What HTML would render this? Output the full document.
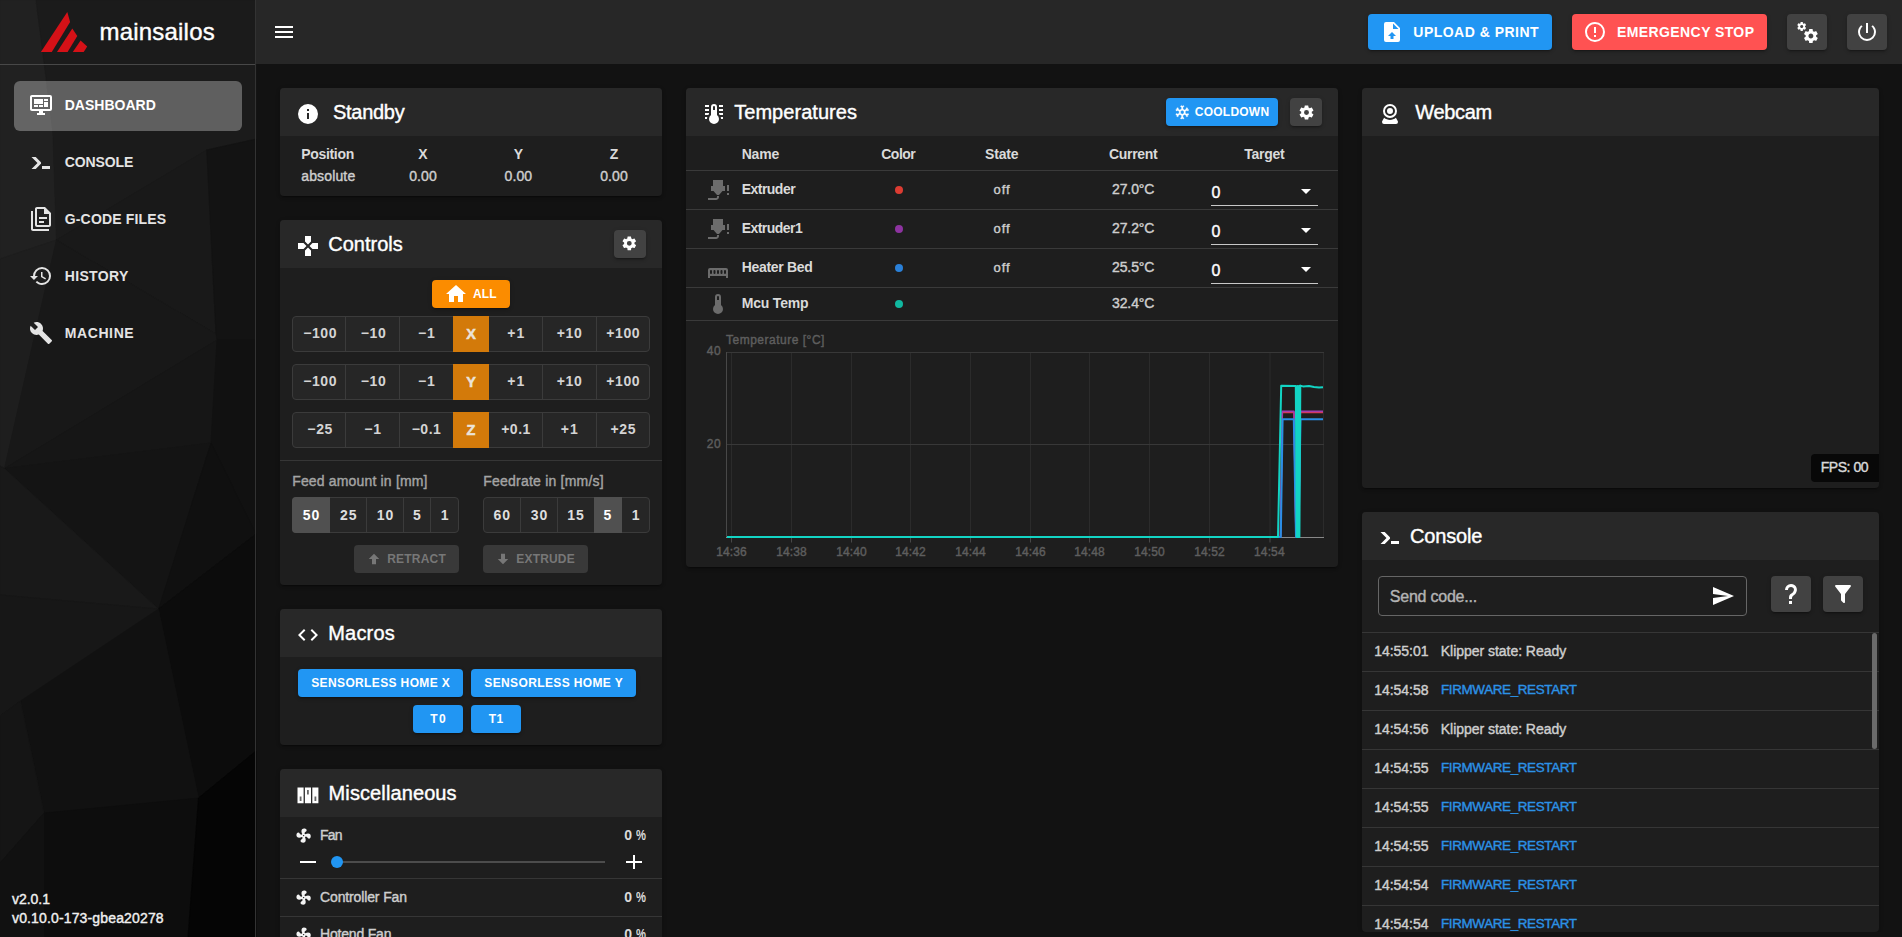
<!DOCTYPE html>
<html lang="en"><head><meta charset="utf-8"><title>Mainsail</title>
<style>
html,body{margin:0;padding:0;}
body{width:1902px;height:937px;overflow:hidden;background:#121212;position:relative;font-family:"Liberation Sans",sans-serif;}
.t{position:absolute;white-space:nowrap;line-height:20px;height:20px;}
.b{position:absolute;box-sizing:border-box;}
.i{position:absolute;display:block;overflow:visible;}
.sh{box-shadow:0 3px 1px -2px rgba(0,0,0,.2),0 2px 2px 0 rgba(0,0,0,.14),0 1px 5px 0 rgba(0,0,0,.12);}
.card{position:absolute;background:#1e1e1e;border-radius:4px;overflow:hidden;box-shadow:0 3px 1px -2px rgba(0,0,0,.2),0 2px 2px 0 rgba(0,0,0,.14),0 1px 5px 0 rgba(0,0,0,.12);}
.hd{position:absolute;left:0;top:0;right:0;height:48px;background:#282828;}
</style></head><body>

<svg class="i" style="left:0;top:0" width="255" height="937" viewBox="0 0 255 937"><rect width="255" height="937" fill="#171717"/><polygon points="0,0 36,0 52.8,130 56.4,240 0,259" fill="#212121" stroke="#212121" stroke-width="0.7"/><polygon points="0,259 56.4,240 33.6,340 4.5,468.5 0,466" fill="#1e1e1e" stroke="#1e1e1e" stroke-width="0.7"/><polygon points="36,0 256,0 256,139 206.7,150 56.4,240 52.8,130" fill="#1b1b1b" stroke="#1b1b1b" stroke-width="0.7"/><polygon points="56.4,240 206.7,150 216,334" fill="#191919" stroke="#191919" stroke-width="0.7"/><polygon points="56.4,240 216,334 217,340 4.5,468.5 33.6,340" fill="#181818" stroke="#181818" stroke-width="0.7"/><polygon points="206.7,150 256,139 256,340 217,340 216,334" fill="#131313" stroke="#131313" stroke-width="0.7"/><polygon points="4.5,468.5 217,340 211,443" fill="#161616" stroke="#161616" stroke-width="0.7"/><polygon points="4.5,468.5 211,443 158.5,609" fill="#141414" stroke="#141414" stroke-width="0.7"/><polygon points="0,466 4.5,468.5 158.5,609 0,595" fill="#191919" stroke="#191919" stroke-width="0.7"/><polygon points="0,595 158.5,609 20.5,701 0,716" fill="#171717" stroke="#171717" stroke-width="0.7"/><polygon points="217,340 256,340 256,534 211,443" fill="#111111" stroke="#111111" stroke-width="0.7"/><polygon points="211,443 256,534 158.5,609" fill="#101010" stroke="#101010" stroke-width="0.7"/><polygon points="158.5,609 256,534 256,751 198.5,798" fill="#0c0c0c" stroke="#0c0c0c" stroke-width="0.7"/><polygon points="20.5,701 158.5,609 198.5,798 44,813" fill="#111111" stroke="#111111" stroke-width="0.7"/><polygon points="0,716 20.5,701 44,813 0,863" fill="#151515" stroke="#151515" stroke-width="0.7"/><polygon points="44,813 198.5,798 188,937 44,937" fill="#0d0d0d" stroke="#0d0d0d" stroke-width="0.7"/><polygon points="198.5,798 256,751 256,937 188,937" fill="#050505" stroke="#050505" stroke-width="0.7"/><polygon points="0,863 44,813 44,937 0,937" fill="#111111" stroke="#111111" stroke-width="0.7"/></svg>
<div class="b" style="left:255px;top:0px;width:1px;height:937px;background:#333333;"></div>
<div class="b" style="left:0px;top:64px;width:255px;height:1px;background:#484848;"></div>
<svg class="i" style="left:0;top:0" width="100" height="64" viewBox="0 0 100 64">
<polygon points="40.9,52 67.3,12 70.1,22.1 51.8,52" fill="#d51117"/>
<polygon points="57,52 72.3,28.5 77.3,36 67.6,52" fill="#d51117"/>
<polygon points="72.8,52 80.6,40.5 87.2,46.5 83.7,52" fill="#d51117"/>
</svg>
<div class="t" style="left:99.50px;top:21.68px;font-size:24px;color:#fff;letter-spacing:0.202px;-webkit-text-stroke:0.4px #fff;">mainsailos</div>
<div class="b" style="left:14px;top:81px;width:228px;height:50px;background:rgba(255,255,255,0.3);border-radius:6px;"></div>
<svg class="i" style="left:29px;top:93px" width="24" height="24" viewBox="0 0 24 24"><path fill="#fff" d="M21,16V4H3V16H21M21,2A2,2 0 0,1 23,4V16A2,2 0 0,1 21,18H14V20H16V22H8V20H10V18H3C1.89,18 1,17.1 1,16V4C1,2.89 1.89,2 3,2H21M5,6H14V11H5V6M15,6H19V8H15V6M19,9V14H15V9H19M5,12H9V14H5V12M10,12H14V14H10V12Z" /></svg>
<div class="t" style="left:64.70px;top:95.15px;font-size:14px;font-weight:700;color:#fff;letter-spacing:0.012px;">DASHBOARD</div>
<svg class="i" style="left:29px;top:150px" width="24" height="24" viewBox="0 0 24 24"><path fill="#e4e4e4" d="M13,19V16H21V19H13M8.5,13L2.47,7H6.71L11.67,11.95C12.25,12.54 12.25,13.5 11.67,14.07L6.74,19H2.5L8.5,13Z" /></svg>
<div class="t" style="left:64.70px;top:152.15px;font-size:14px;font-weight:700;color:#e4e4e4;letter-spacing:-0.105px;">CONSOLE</div>
<svg class="i" style="left:29px;top:207px" width="24" height="24" viewBox="0 0 24 24"><path fill="#e4e4e4" d="M16,0H8C6.9,0 6,0.9 6,2V18C6,19.1 6.9,20 8,20H20C21.1,20 22,19.1 22,18V6L16,0M20,18H8V2H15V7H20V18M4,4V22H20V24H4C2.9,24 2,23.1 2,22V4H4M10,10V12H18V10H10M10,14V16H15V14H10Z" /></svg>
<div class="t" style="left:64.70px;top:209.35px;font-size:14px;font-weight:700;color:#e4e4e4;letter-spacing:0.176px;">G-CODE FILES</div>
<svg class="i" style="left:29px;top:264px" width="24" height="24" viewBox="0 0 24 24"><path fill="#e4e4e4" d="M13.5,8H12V13L16.28,15.54L17,14.33L13.5,12.25V8M13,3A9,9 0 0,0 4,12H1L4.96,16.03L9,12H6A7,7 0 0,1 13,5A7,7 0 0,1 20,12A7,7 0 0,1 13,19C11.07,19 9.32,18.21 8.06,16.94L6.64,18.36C8.27,20 10.5,21 13,21A9,9 0 0,0 22,12A9,9 0 0,0 13,3" /></svg>
<div class="t" style="left:64.70px;top:266.35px;font-size:14px;font-weight:700;color:#e4e4e4;letter-spacing:0.357px;">HISTORY</div>
<svg class="i" style="left:29px;top:321px" width="24" height="24" viewBox="0 0 24 24"><path fill="#e4e4e4" d="M22.7,19L13.6,9.9C14.5,7.6 14,4.9 12.1,3C10.1,1 7.1,0.6 4.7,1.7L9,6L6,9L1.6,4.7C0.4,7.1 0.9,10.1 2.9,12.1C4.8,14 7.5,14.5 9.8,13.6L18.9,22.7C19.3,23.1 19.9,23.1 20.3,22.7L22.6,20.4C23.1,20 23.1,19.3 22.7,19Z" /></svg>
<div class="t" style="left:64.70px;top:323.35px;font-size:14px;font-weight:700;color:#e4e4e4;letter-spacing:0.611px;">MACHINE</div>
<div class="t" style="left:12.00px;top:888.65px;font-size:14px;color:#f0f0f0;letter-spacing:-0.028px;-webkit-text-stroke:0.4px #f0f0f0;">v2.0.1</div>
<div class="t" style="left:12.00px;top:908.15px;font-size:14px;color:#f0f0f0;letter-spacing:0.146px;-webkit-text-stroke:0.4px #f0f0f0;">v0.10.0-173-gbea20278</div>
<div class="b" style="left:256px;top:0px;width:1646px;height:64px;background:#272727;"></div>
<svg class="i" style="left:272px;top:20px" width="24" height="24" viewBox="0 0 24 24"><path fill="#fff" d="M3,6H21V8H3V6M3,11H21V13H3V11M3,16H21V18H3V16Z" /></svg>
<div class="b sh" style="left:1368px;top:14px;width:184px;height:36px;background:#2196f3;border-radius:4px;"></div>
<svg class="i" style="left:1380px;top:20px" width="24" height="24" viewBox="0 0 24 24"><path fill="#fff" d="M14,2H6A2,2 0 0,0 4,4V20A2,2 0 0,0 6,22H18A2,2 0 0,0 20,20V8L14,2M13.5,16V19H10.5V16H8L12,12L16,16H13.5M13,9V3.5L18.5,9H13Z" /></svg>
<div class="t" style="left:1413.30px;top:22.15px;font-size:14px;font-weight:700;color:#fff;letter-spacing:0.484px;">UPLOAD &amp; PRINT</div>
<div class="b sh" style="left:1572px;top:14px;width:195px;height:36px;background:#ff5252;border-radius:4px;"></div>
<svg class="i" style="left:1582.9px;top:20px" width="24" height="24" viewBox="0 0 24 24"><path fill="#fff" d="M11,15H13V17H11V15M11,7H13V13H11V7M12,2C6.47,2 2,6.5 2,12A10,10 0 0,0 12,22A10,10 0 0,0 22,12A10,10 0 0,0 12,2M12,20A8,8 0 0,1 4,12A8,8 0 0,1 12,4A8,8 0 0,1 20,12A8,8 0 0,1 12,20Z" /></svg>
<div class="t" style="left:1617.00px;top:22.15px;font-size:14px;font-weight:700;color:#fff;letter-spacing:0.405px;">EMERGENCY STOP</div>
<div class="b sh" style="left:1787px;top:14px;width:40px;height:36px;background:#424242;border-radius:4px;"></div>
<svg class="i" style="left:1795px;top:20px" width="24" height="24" viewBox="0 0 24 24"><path fill="#fff" d="M15.9,18.45C17.25,18.45 18.35,17.35 18.35,16C18.35,14.65 17.25,13.55 15.9,13.55C14.54,13.55 13.45,14.65 13.45,16C13.45,17.35 14.54,18.45 15.9,18.45M21.1,16.68L22.58,17.84C22.71,17.95 22.75,18.13 22.66,18.29L21.26,20.71C21.17,20.86 21,20.92 20.83,20.86L19.09,20.16C18.73,20.44 18.33,20.67 17.91,20.85L17.64,22.7C17.62,22.87 17.47,23 17.3,23H14.5C14.32,23 14.18,22.87 14.15,22.7L13.89,20.85C13.46,20.67 13.07,20.44 12.71,20.16L10.96,20.86C10.81,20.92 10.62,20.86 10.54,20.71L9.14,18.29C9.05,18.13 9.09,17.95 9.22,17.84L10.7,16.68L10.65,16L10.7,15.31L9.22,14.16C9.09,14.05 9.05,13.86 9.14,13.71L10.54,11.29C10.62,11.13 10.81,11.07 10.96,11.13L12.71,11.84C13.07,11.56 13.46,11.32 13.89,11.15L14.15,9.29C14.18,9.13 14.32,9 14.5,9H17.3C17.47,9 17.62,9.13 17.64,9.29L17.91,11.15C18.33,11.32 18.73,11.56 19.09,11.84L20.83,11.13C21,11.07 21.17,11.13 21.26,11.29L22.66,13.71C22.75,13.86 22.71,14.05 22.58,14.16L21.1,15.31L21.15,16L21.1,16.68M6.69,8.07C7.56,8.07 8.26,7.37 8.26,6.5C8.26,5.63 7.56,4.92 6.69,4.92A1.58,1.58 0 0,0 5.11,6.5C5.11,7.37 5.82,8.07 6.69,8.07M10.03,6.94L11,7.68C11.07,7.75 11.09,7.87 11.03,7.97L10.13,9.53C10.08,9.63 9.96,9.67 9.86,9.63L8.74,9.18L8,9.62L7.81,10.81C7.79,10.92 7.7,11 7.59,11H5.79C5.67,11 5.58,10.92 5.56,10.81L5.4,9.62L4.64,9.18L3.5,9.63C3.41,9.67 3.3,9.63 3.24,9.53L2.34,7.97C2.28,7.87 2.31,7.75 2.39,7.68L3.34,6.94L3.31,6.5L3.34,6.06L2.39,5.32C2.31,5.25 2.28,5.13 2.34,5.03L3.24,3.47C3.3,3.37 3.41,3.33 3.5,3.37L4.63,3.82L5.4,3.38L5.56,2.19C5.58,2.08 5.67,2 5.79,2H7.59C7.7,2 7.79,2.08 7.81,2.19L8,3.38L8.74,3.82L9.86,3.37C9.96,3.33 10.08,3.37 10.13,3.47L11.03,5.03C11.09,5.13 11.07,5.25 11,5.32L10.03,6.06L10.06,6.5L10.03,6.94Z" /></svg>
<div class="b sh" style="left:1847px;top:14px;width:40px;height:36px;background:#424242;border-radius:4px;"></div>
<svg class="i" style="left:1855px;top:20px" width="24" height="24" viewBox="0 0 24 24"><path fill="#fff" d="M13,3H11V13H13V3M17.83,5.17L16.41,6.59C18.05,7.91 19,9.9 19,12A7,7 0 0,1 12,19C8.14,19 5,15.88 5,12C5,9.91 5.95,7.91 7.58,6.58L6.17,5.17C4.23,6.82 3,9.26 3,12A9,9 0 0,0 12,21A9,9 0 0,0 21,12C21,9.27 19.77,6.82 17.83,5.17Z" /></svg>
<div class="b sh" style="left:280px;top:88px;width:382px;height:108px;background:#1e1e1e;border-radius:4px;"></div>
<div class="b" style="left:280px;top:88px;width:382px;height:48px;background:#282828;border-radius:4px 4px 0 0;"></div>
<svg class="i" style="left:296px;top:102px" width="24" height="24" viewBox="0 0 24 24"><path fill="#fff" d="M13,9H11V7H13M13,17H11V11H13M12,2A10,10 0 0,0 2,12A10,10 0 0,0 12,22A10,10 0 0,0 22,12A10,10 0 0,0 12,2Z" /></svg>
<div class="t" style="left:333.00px;top:102.27px;font-size:20px;color:#fff;letter-spacing:-0.282px;-webkit-text-stroke:0.4px #fff;">Standby</div>
<div class="t" style="left:301.30px;top:144.35px;font-size:14px;font-weight:700;color:#dadada;letter-spacing:-0.332px;">Position</div>
<div class="t" style="left:301.20px;top:165.95px;font-size:14px;color:#cecece;letter-spacing:0.153px;-webkit-text-stroke:0.4px #cecece;">absolute</div>
<div class="t" style="left:418.33px;top:144.35px;font-size:14px;font-weight:700;color:#dadada;letter-spacing:0.000px;">X</div>
<div class="t" style="left:409.25px;top:165.95px;font-size:14px;color:#cecece;letter-spacing:0.084px;-webkit-text-stroke:0.4px #cecece;">0.00</div>
<div class="t" style="left:513.63px;top:144.35px;font-size:14px;font-weight:700;color:#dadada;letter-spacing:0.000px;">Y</div>
<div class="t" style="left:504.55px;top:165.95px;font-size:14px;color:#cecece;letter-spacing:0.084px;-webkit-text-stroke:0.4px #cecece;">0.00</div>
<div class="t" style="left:609.72px;top:144.35px;font-size:14px;font-weight:700;color:#dadada;letter-spacing:0.000px;">Z</div>
<div class="t" style="left:600.25px;top:165.95px;font-size:14px;color:#cecece;letter-spacing:0.084px;-webkit-text-stroke:0.4px #cecece;">0.00</div>
<div class="b sh" style="left:280px;top:220px;width:382px;height:365px;background:#1e1e1e;border-radius:4px;"></div>
<div class="b" style="left:280px;top:220px;width:382px;height:48px;background:#282828;border-radius:4px 4px 0 0;"></div>
<svg class="i" style="left:296px;top:234px" width="24" height="24" viewBox="0 0 24 24"><path fill="#fff" d="M16.5,9L13.5,12L16.5,15H22V9M9,16.5V22H15V16.5L12,13.5M7.5,9H2V15H7.5L10.5,12M15,7.5V2H9V7.5L12,10.5L15,7.5Z" /></svg>
<div class="t" style="left:328.30px;top:233.87px;font-size:20px;color:#fff;letter-spacing:0.004px;-webkit-text-stroke:0.4px #fff;">Controls</div>
<div class="b sh" style="left:614px;top:230px;width:32px;height:28px;background:#424242;border-radius:4px;"></div>
<svg class="i" style="left:621.4px;top:235.3px" width="16.6" height="16.6" viewBox="0 0 24 24"><path fill="#fff" d="M12,15.5A3.5,3.5 0 0,1 8.5,12A3.5,3.5 0 0,1 12,8.5A3.5,3.5 0 0,1 15.5,12A3.5,3.5 0 0,1 12,15.5M19.43,12.97C19.47,12.65 19.5,12.33 19.5,12C19.5,11.67 19.47,11.34 19.43,11L21.54,9.37C21.73,9.22 21.78,8.95 21.66,8.73L19.66,5.27C19.54,5.05 19.27,4.96 19.05,5.05L16.56,6.05C16.04,5.66 15.5,5.32 14.87,5.07L14.5,2.42C14.46,2.18 14.25,2 14,2H10C9.75,2 9.54,2.18 9.5,2.42L9.13,5.07C8.5,5.32 7.96,5.66 7.44,6.05L4.95,5.05C4.73,4.96 4.46,5.05 4.34,5.27L2.34,8.73C2.21,8.95 2.27,9.22 2.46,9.37L4.57,11C4.53,11.34 4.5,11.67 4.5,12C4.5,12.33 4.53,12.65 4.57,12.97L2.46,14.63C2.27,14.78 2.21,15.05 2.34,15.27L4.34,18.73C4.46,18.95 4.73,19.03 4.95,18.95L7.44,17.94C7.96,18.34 8.5,18.68 9.13,18.93L9.5,21.58C9.54,21.82 9.75,22 10,22H14C14.25,22 14.46,21.82 14.5,21.58L14.87,18.93C15.5,18.67 16.04,18.34 16.56,17.94L19.05,18.95C19.27,19.03 19.54,18.95 19.66,18.73L21.66,15.27C21.78,15.05 21.73,14.78 21.54,14.63L19.43,12.97Z" /></svg>
<div class="b sh" style="left:432px;top:280px;width:78px;height:28px;background:#fb8c00;border-radius:4px;"></div>
<svg class="i" style="left:444.3px;top:282.2px" width="24" height="24" viewBox="0 0 24 24"><path fill="#fff" d="M10,20V14H14V20H19V12H22L12,3L2,12H5V20H10Z" /></svg>
<div class="t" style="left:473.00px;top:284.04px;font-size:12px;font-weight:700;color:#fff;letter-spacing:0.187px;">ALL</div>
<div class="b" style="left:292px;top:316px;width:358px;height:36px;background:#262626;border-radius:4px;border:1px solid #3b3b3b;"></div>
<div class="b" style="left:453px;top:316px;width:36px;height:36px;background:#d37a0a;"></div>
<div class="b" style="left:345px;top:317px;width:1px;height:34px;background:#3b3b3b;"></div>
<div class="b" style="left:399px;top:317px;width:1px;height:34px;background:#3b3b3b;"></div>
<div class="b" style="left:542px;top:317px;width:1px;height:34px;background:#3b3b3b;"></div>
<div class="b" style="left:595.5px;top:317px;width:1px;height:34px;background:#3b3b3b;"></div>
<div class="t" style="left:303.22px;top:323.45px;font-size:14px;font-weight:700;color:#d4d4d4;letter-spacing:0.578px;">−100</div>
<div class="t" style="left:360.67px;top:323.45px;font-size:14px;font-weight:700;color:#d4d4d4;letter-spacing:0.653px;">−10</div>
<div class="t" style="left:418.03px;top:323.45px;font-size:14px;font-weight:700;color:#d4d4d4;letter-spacing:0.878px;">−1</div>
<div class="t" style="left:466.16px;top:324.38px;font-size:14.5px;font-weight:700;color:#ebe3d8;letter-spacing:0.000px;-webkit-text-stroke:0.5px #ebe3d8;">X</div>
<div class="t" style="left:507.33px;top:323.45px;font-size:14px;font-weight:700;color:#d4d4d4;letter-spacing:0.878px;">+1</div>
<div class="t" style="left:556.72px;top:323.45px;font-size:14px;font-weight:700;color:#d4d4d4;letter-spacing:0.653px;">+10</div>
<div class="t" style="left:606.37px;top:323.45px;font-size:14px;font-weight:700;color:#d4d4d4;letter-spacing:0.578px;">+100</div>
<div class="b" style="left:292px;top:364px;width:358px;height:36px;background:#262626;border-radius:4px;border:1px solid #3b3b3b;"></div>
<div class="b" style="left:453px;top:364px;width:36px;height:36px;background:#d37a0a;"></div>
<div class="b" style="left:345px;top:365px;width:1px;height:34px;background:#3b3b3b;"></div>
<div class="b" style="left:399px;top:365px;width:1px;height:34px;background:#3b3b3b;"></div>
<div class="b" style="left:542px;top:365px;width:1px;height:34px;background:#3b3b3b;"></div>
<div class="b" style="left:595.5px;top:365px;width:1px;height:34px;background:#3b3b3b;"></div>
<div class="t" style="left:303.22px;top:371.45px;font-size:14px;font-weight:700;color:#d4d4d4;letter-spacing:0.578px;">−100</div>
<div class="t" style="left:360.67px;top:371.45px;font-size:14px;font-weight:700;color:#d4d4d4;letter-spacing:0.653px;">−10</div>
<div class="t" style="left:418.03px;top:371.45px;font-size:14px;font-weight:700;color:#d4d4d4;letter-spacing:0.878px;">−1</div>
<div class="t" style="left:466.16px;top:372.38px;font-size:14.5px;font-weight:700;color:#ebe3d8;letter-spacing:0.000px;-webkit-text-stroke:0.5px #ebe3d8;">Y</div>
<div class="t" style="left:507.33px;top:371.45px;font-size:14px;font-weight:700;color:#d4d4d4;letter-spacing:0.878px;">+1</div>
<div class="t" style="left:556.72px;top:371.45px;font-size:14px;font-weight:700;color:#d4d4d4;letter-spacing:0.653px;">+10</div>
<div class="t" style="left:606.37px;top:371.45px;font-size:14px;font-weight:700;color:#d4d4d4;letter-spacing:0.578px;">+100</div>
<div class="b" style="left:292px;top:412px;width:358px;height:36px;background:#262626;border-radius:4px;border:1px solid #3b3b3b;"></div>
<div class="b" style="left:453px;top:412px;width:36px;height:36px;background:#d37a0a;"></div>
<div class="b" style="left:345px;top:413px;width:1px;height:34px;background:#3b3b3b;"></div>
<div class="b" style="left:399px;top:413px;width:1px;height:34px;background:#3b3b3b;"></div>
<div class="b" style="left:542px;top:413px;width:1px;height:34px;background:#3b3b3b;"></div>
<div class="b" style="left:595.5px;top:413px;width:1px;height:34px;background:#3b3b3b;"></div>
<div class="t" style="left:307.32px;top:419.45px;font-size:14px;font-weight:700;color:#d4d4d4;letter-spacing:0.653px;">−25</div>
<div class="t" style="left:364.28px;top:419.45px;font-size:14px;font-weight:700;color:#d4d4d4;letter-spacing:0.878px;">−1</div>
<div class="t" style="left:411.67px;top:419.45px;font-size:14px;font-weight:700;color:#d4d4d4;letter-spacing:0.507px;">−0.1</div>
<div class="t" style="left:466.57px;top:420.38px;font-size:14.5px;font-weight:700;color:#ebe3d8;letter-spacing:0.000px;-webkit-text-stroke:0.5px #ebe3d8;">Z</div>
<div class="t" style="left:501.17px;top:419.45px;font-size:14px;font-weight:700;color:#d4d4d4;letter-spacing:0.507px;">+0.1</div>
<div class="t" style="left:560.83px;top:419.45px;font-size:14px;font-weight:700;color:#d4d4d4;letter-spacing:0.878px;">+1</div>
<div class="t" style="left:610.47px;top:419.45px;font-size:14px;font-weight:700;color:#d4d4d4;letter-spacing:0.653px;">+25</div>
<div class="b" style="left:280px;top:460px;width:382px;height:1px;background:#363636;"></div>
<div class="t" style="left:292.20px;top:471.35px;font-size:14px;color:#a4a4a4;letter-spacing:0.168px;-webkit-text-stroke:0.4px #a4a4a4;">Feed amount in [mm]</div>
<div class="t" style="left:483.30px;top:471.35px;font-size:14px;color:#a4a4a4;letter-spacing:0.217px;-webkit-text-stroke:0.4px #a4a4a4;">Feedrate in [mm/s]</div>
<div class="b" style="left:292px;top:497px;width:167px;height:36px;background:#262626;border-radius:4px;border:1px solid #3b3b3b;"></div>
<div class="b" style="left:292px;top:497px;width:38px;height:36px;background:#505050;border-radius:4px 0 0 4px;"></div>
<div class="b" style="left:366px;top:498px;width:1px;height:34px;background:#3b3b3b;"></div>
<div class="b" style="left:403px;top:498px;width:1px;height:34px;background:#3b3b3b;"></div>
<div class="b" style="left:430px;top:498px;width:1px;height:34px;background:#3b3b3b;"></div>
<div class="t" style="left:302.71px;top:505.15px;font-size:14px;font-weight:700;color:#fff;letter-spacing:1.000px;">50</div>
<div class="t" style="left:339.96px;top:505.15px;font-size:14px;font-weight:700;color:#dedede;letter-spacing:1.000px;">25</div>
<div class="t" style="left:376.71px;top:505.15px;font-size:14px;font-weight:700;color:#dedede;letter-spacing:1.000px;">10</div>
<div class="t" style="left:413.11px;top:505.15px;font-size:14px;font-weight:700;color:#dedede;letter-spacing:0.000px;">5</div>
<div class="t" style="left:440.86px;top:505.15px;font-size:14px;font-weight:700;color:#dedede;letter-spacing:0.000px;">1</div>
<div class="b" style="left:483px;top:497px;width:167px;height:36px;background:#262626;border-radius:4px;border:1px solid #3b3b3b;"></div>
<div class="b" style="left:593.5px;top:497px;width:28px;height:36px;background:#505050;"></div>
<div class="b" style="left:520px;top:498px;width:1px;height:34px;background:#3b3b3b;"></div>
<div class="b" style="left:557px;top:498px;width:1px;height:34px;background:#3b3b3b;"></div>
<div class="t" style="left:493.46px;top:505.15px;font-size:14px;font-weight:700;color:#dedede;letter-spacing:1.000px;">60</div>
<div class="t" style="left:530.71px;top:505.15px;font-size:14px;font-weight:700;color:#dedede;letter-spacing:1.000px;">30</div>
<div class="t" style="left:567.21px;top:505.15px;font-size:14px;font-weight:700;color:#dedede;letter-spacing:1.000px;">15</div>
<div class="t" style="left:603.61px;top:505.15px;font-size:14px;font-weight:700;color:#fff;letter-spacing:0.000px;">5</div>
<div class="t" style="left:631.86px;top:505.15px;font-size:14px;font-weight:700;color:#dedede;letter-spacing:0.000px;">1</div>
<div class="b" style="left:354px;top:545px;width:105px;height:28px;background:#393939;border-radius:4px;"></div>
<svg class="i" style="left:366.2px;top:551.2px" width="16" height="16" viewBox="0 0 24 24"><path fill="#777" d="M15,20H9V12H4.16L12,4.16L19.84,12H15V20Z" /></svg>
<div class="t" style="left:387.20px;top:548.84px;font-size:12px;font-weight:700;color:#777;letter-spacing:0.212px;">RETRACT</div>
<div class="b" style="left:483px;top:545px;width:105px;height:28px;background:#393939;border-radius:4px;"></div>
<svg class="i" style="left:495.2px;top:551.2px" width="16" height="16" viewBox="0 0 24 24"><path fill="#777" d="M9,4H15V12H19.84L12,19.84L4.16,12H9V4Z" /></svg>
<div class="t" style="left:516.30px;top:548.84px;font-size:12px;font-weight:700;color:#777;letter-spacing:0.176px;">EXTRUDE</div>
<div class="b sh" style="left:280px;top:609px;width:382px;height:136px;background:#1e1e1e;border-radius:4px;"></div>
<div class="b" style="left:280px;top:609px;width:382px;height:48px;background:#282828;border-radius:4px 4px 0 0;"></div>
<svg class="i" style="left:296px;top:622.7px" width="24" height="24" viewBox="0 0 24 24"><path fill="#fff" d="M14.6,16.6L19.2,12L14.6,7.4L16,6L22,12L16,18L14.6,16.6M9.4,16.6L4.8,12L9.4,7.4L8,6L2,12L8,18L9.4,16.6Z" /></svg>
<div class="t" style="left:328.30px;top:623.07px;font-size:20px;color:#fff;letter-spacing:0.166px;-webkit-text-stroke:0.4px #fff;">Macros</div>
<div class="b sh" style="left:298px;top:669px;width:165px;height:28px;background:#2196f3;border-radius:4px;"></div>
<div class="t" style="left:311.25px;top:672.84px;font-size:12px;font-weight:700;color:#fff;letter-spacing:0.363px;">SENSORLESS HOME X</div>
<div class="b sh" style="left:471px;top:669px;width:165px;height:28px;background:#2196f3;border-radius:4px;"></div>
<div class="t" style="left:484.25px;top:672.84px;font-size:12px;font-weight:700;color:#fff;letter-spacing:0.376px;">SENSORLESS HOME Y</div>
<div class="b sh" style="left:413px;top:705px;width:50px;height:28px;background:#2196f3;border-radius:4px;"></div>
<div class="t" style="left:430.25px;top:708.84px;font-size:12px;font-weight:700;color:#fff;letter-spacing:1.496px;">T0</div>
<div class="b sh" style="left:471px;top:705px;width:50px;height:28px;background:#2196f3;border-radius:4px;"></div>
<div class="t" style="left:488.75px;top:708.84px;font-size:12px;font-weight:700;color:#fff;letter-spacing:0.496px;">T1</div>
<div class="b sh" style="left:280px;top:769px;width:382px;height:191px;background:#1e1e1e;border-radius:4px;"></div>
<div class="b" style="left:280px;top:769px;width:382px;height:48px;background:#282828;border-radius:4px 4px 0 0;"></div>
<svg class="i" style="left:297px;top:786.6px" width="22" height="17" viewBox="0 0 22 17">
<path fill="#fff" d="M0.5,0.6H6.6V16.3H0.5Z M7.9,0.6H14V16.3H7.9Z M15.3,0.6H21.4V16.3H15.3Z"/>
<path fill="#666" d="M2.7,9.5H4.5V14H2.7Z M10,3H11.8V7.5H10Z M17.5,9.5H19.3V14H17.5Z"/>
</svg>
<div class="t" style="left:328.60px;top:783.07px;font-size:20px;color:#fff;letter-spacing:0.106px;-webkit-text-stroke:0.4px #fff;">Miscellaneous</div>
<svg class="i" style="left:295.4px;top:827.4px" width="17.2" height="17.2" viewBox="0 0 24 24"><path fill="#f4f4f4" d="M12,11A1,1 0 0,0 11,12A1,1 0 0,0 12,13A1,1 0 0,0 13,12A1,1 0 0,0 12,11M12.5,2C17,2 17.11,5.57 14.75,6.75C13.76,7.24 13.32,8.29 13.13,9.22C13.61,9.42 14.03,9.73 14.35,10.13C18.05,8.13 22.03,8.92 22.03,12.5C22.03,17 18.46,17.1 17.28,14.73C16.78,13.74 15.72,13.3 14.79,13.11C14.59,13.59 14.28,14 13.88,14.34C15.87,18.03 15.08,22 11.5,22C7,22 6.91,18.42 9.27,17.24C10.25,16.75 10.69,15.71 10.89,14.79C10.4,14.59 9.97,14.27 9.65,13.87C5.96,15.85 2,15.07 2,11.5C2,7 5.56,6.89 6.74,9.26C7.24,10.25 8.29,10.68 9.22,10.87C9.41,10.39 9.73,9.97 10.14,9.65C8.15,5.96 8.94,2 12.5,2Z" /></svg>
<div class="t" style="left:320.00px;top:825.45px;font-size:14px;color:#cecece;letter-spacing:-0.762px;-webkit-text-stroke:0.4px #cecece;">Fan</div>
<div class="t" style="left:624.30px;top:825.45px;font-size:14px;font-weight:700;color:#dadada;letter-spacing:0.000px;">0</div>
<div class="t" style="left:636.00px;top:825.45px;font-size:14px;font-weight:700;color:#dadada;letter-spacing:0.000px;transform:scaleX(0.8);transform-origin:0 50%;">%</div>
<div class="b" style="left:300.4px;top:860.8px;width:15.3px;height:2.4px;background:#fff;"></div>
<div class="b" style="left:337px;top:861px;width:268px;height:2px;background:#4c4c4c;"></div>
<div class="b" style="left:331px;top:856px;width:12px;height:12px;border-radius:50%;background:#2196f3"></div>
<div class="b" style="left:626.2px;top:860.8px;width:15.4px;height:2.4px;background:#fff;"></div>
<div class="b" style="left:632.7px;top:854.8px;width:2.4px;height:14.6px;background:#fff;"></div>
<div class="b" style="left:280px;top:878px;width:382px;height:1px;background:#363636;"></div>
<svg class="i" style="left:295.4px;top:889px" width="17.2" height="17.2" viewBox="0 0 24 24"><path fill="#f4f4f4" d="M12,11A1,1 0 0,0 11,12A1,1 0 0,0 12,13A1,1 0 0,0 13,12A1,1 0 0,0 12,11M12.5,2C17,2 17.11,5.57 14.75,6.75C13.76,7.24 13.32,8.29 13.13,9.22C13.61,9.42 14.03,9.73 14.35,10.13C18.05,8.13 22.03,8.92 22.03,12.5C22.03,17 18.46,17.1 17.28,14.73C16.78,13.74 15.72,13.3 14.79,13.11C14.59,13.59 14.28,14 13.88,14.34C15.87,18.03 15.08,22 11.5,22C7,22 6.91,18.42 9.27,17.24C10.25,16.75 10.69,15.71 10.89,14.79C10.4,14.59 9.97,14.27 9.65,13.87C5.96,15.85 2,15.07 2,11.5C2,7 5.56,6.89 6.74,9.26C7.24,10.25 8.29,10.68 9.22,10.87C9.41,10.39 9.73,9.97 10.14,9.65C8.15,5.96 8.94,2 12.5,2Z" /></svg>
<div class="t" style="left:320.00px;top:887.05px;font-size:14px;color:#cecece;letter-spacing:-0.131px;-webkit-text-stroke:0.4px #cecece;">Controller Fan</div>
<div class="t" style="left:624.30px;top:887.05px;font-size:14px;font-weight:700;color:#dadada;letter-spacing:0.000px;">0</div>
<div class="t" style="left:636.00px;top:887.05px;font-size:14px;font-weight:700;color:#dadada;letter-spacing:0.000px;transform:scaleX(0.8);transform-origin:0 50%;">%</div>
<div class="b" style="left:280px;top:916px;width:382px;height:1px;background:#363636;"></div>
<svg class="i" style="left:295.4px;top:926px" width="17.2" height="17.2" viewBox="0 0 24 24"><path fill="#f4f4f4" d="M12,11A1,1 0 0,0 11,12A1,1 0 0,0 12,13A1,1 0 0,0 13,12A1,1 0 0,0 12,11M12.5,2C17,2 17.11,5.57 14.75,6.75C13.76,7.24 13.32,8.29 13.13,9.22C13.61,9.42 14.03,9.73 14.35,10.13C18.05,8.13 22.03,8.92 22.03,12.5C22.03,17 18.46,17.1 17.28,14.73C16.78,13.74 15.72,13.3 14.79,13.11C14.59,13.59 14.28,14 13.88,14.34C15.87,18.03 15.08,22 11.5,22C7,22 6.91,18.42 9.27,17.24C10.25,16.75 10.69,15.71 10.89,14.79C10.4,14.59 9.97,14.27 9.65,13.87C5.96,15.85 2,15.07 2,11.5C2,7 5.56,6.89 6.74,9.26C7.24,10.25 8.29,10.68 9.22,10.87C9.41,10.39 9.73,9.97 10.14,9.65C8.15,5.96 8.94,2 12.5,2Z" /></svg>
<div class="t" style="left:320.00px;top:924.15px;font-size:14px;color:#cecece;letter-spacing:-0.184px;-webkit-text-stroke:0.4px #cecece;">Hotend Fan</div>
<div class="t" style="left:624.30px;top:924.15px;font-size:14px;font-weight:700;color:#dadada;letter-spacing:0.000px;">0</div>
<div class="t" style="left:636.00px;top:924.15px;font-size:14px;font-weight:700;color:#dadada;letter-spacing:0.000px;transform:scaleX(0.8);transform-origin:0 50%;">%</div>
<div class="b sh" style="left:686px;top:88px;width:652px;height:479px;background:#1e1e1e;border-radius:4px;"></div>
<div class="b" style="left:686px;top:88px;width:652px;height:48px;background:#282828;border-radius:4px 4px 0 0;"></div>
<svg class="i" style="left:701.8px;top:102px" width="24" height="24" viewBox="0 0 24 24"><path fill="#fff" d="M17,3H21V5H17V3M17,7H21V9H17V7M17,11H21V13H17.75L17,12.1V11M21,15V17H19C19,16.31 18.9,15.63 18.71,15H21M7,3V5H3V3H7M7,7V9H3V7H7M7,11V12.1L6.25,13H3V11H7M3,15H5.29C5.1,15.63 5,16.31 5,17H3V15M15,13V5A3,3 0 0,0 12,2A3,3 0 0,0 9,5V13A5,5 0 0,0 7,17A5,5 0 0,0 12,22A5,5 0 0,0 17,17A5,5 0 0,0 15,13M11,5A1,1 0 0,1 12,4A1,1 0 0,1 13,5V8H11V5Z" /></svg>
<div class="t" style="left:734.20px;top:102.27px;font-size:20px;color:#fff;letter-spacing:0.047px;-webkit-text-stroke:0.4px #fff;">Temperatures</div>
<div class="b sh" style="left:1166px;top:98px;width:112px;height:28px;background:#2196f3;border-radius:4px;"></div>
<svg class="i" style="left:1173.8px;top:103.8px" width="16.5" height="16.5" viewBox="0 0 24 24"><path fill="#fff" d="M20.79,13.95L18.46,14.57L16.46,13.44V10.56L18.46,9.43L20.79,10.05L21.31,8.12L19.54,7.65L20,5.88L18.07,5.36L17.45,7.69L15.45,8.82L13,7.38V5.12L14.71,3.41L13.29,2L12,3.29L10.71,2L9.29,3.41L11,5.12V7.38L8.5,8.82L6.5,7.69L5.92,5.36L4,5.88L4.47,7.65L2.7,8.12L3.22,10.05L5.55,9.43L7.55,10.56V13.45L5.55,14.58L3.22,13.96L2.7,15.89L4.47,16.36L4,18.12L5.93,18.64L6.55,16.31L8.55,15.18L11,16.62V18.88L9.29,20.59L10.71,22L12,20.71L13.29,22L14.7,20.59L13,18.88V16.62L15.5,15.17L17.5,16.3L18.12,18.63L20,18.12L19.53,16.35L21.3,15.88L20.79,13.95M9.5,10.56L12,9.11L14.5,10.56V13.44L12,14.89L9.5,13.44V10.56Z" stroke="#fff" stroke-width="0.5"/></svg>
<div class="t" style="left:1194.80px;top:102.04px;font-size:12px;font-weight:700;color:#fff;letter-spacing:0.235px;">COOLDOWN</div>
<div class="b sh" style="left:1290px;top:98px;width:32px;height:28px;background:#424242;border-radius:4px;"></div>
<svg class="i" style="left:1297.5px;top:103.5px" width="17" height="17" viewBox="0 0 24 24"><path fill="#fff" d="M12,15.5A3.5,3.5 0 0,1 8.5,12A3.5,3.5 0 0,1 12,8.5A3.5,3.5 0 0,1 15.5,12A3.5,3.5 0 0,1 12,15.5M19.43,12.97C19.47,12.65 19.5,12.33 19.5,12C19.5,11.67 19.47,11.34 19.43,11L21.54,9.37C21.73,9.22 21.78,8.95 21.66,8.73L19.66,5.27C19.54,5.05 19.27,4.96 19.05,5.05L16.56,6.05C16.04,5.66 15.5,5.32 14.87,5.07L14.5,2.42C14.46,2.18 14.25,2 14,2H10C9.75,2 9.54,2.18 9.5,2.42L9.13,5.07C8.5,5.32 7.96,5.66 7.44,6.05L4.95,5.05C4.73,4.96 4.46,5.05 4.34,5.27L2.34,8.73C2.21,8.95 2.27,9.22 2.46,9.37L4.57,11C4.53,11.34 4.5,11.67 4.5,12C4.5,12.33 4.53,12.65 4.57,12.97L2.46,14.63C2.27,14.78 2.21,15.05 2.34,15.27L4.34,18.73C4.46,18.95 4.73,19.03 4.95,18.95L7.44,17.94C7.96,18.34 8.5,18.68 9.13,18.93L9.5,21.58C9.54,21.82 9.75,22 10,22H14C14.25,22 14.46,21.82 14.5,21.58L14.87,18.93C15.5,18.67 16.04,18.34 16.56,17.94L19.05,18.95C19.27,19.03 19.54,18.95 19.66,18.73L21.66,15.27C21.78,15.05 21.73,14.78 21.54,14.63L19.43,12.97Z" /></svg>
<div class="t" style="left:741.70px;top:144.45px;font-size:14px;font-weight:700;color:#dadada;letter-spacing:-0.210px;">Name</div>
<div class="t" style="left:881.25px;top:144.45px;font-size:14px;font-weight:700;color:#dadada;letter-spacing:-0.513px;">Color</div>
<div class="t" style="left:985.00px;top:144.45px;font-size:14px;font-weight:700;color:#dadada;letter-spacing:-0.159px;">State</div>
<div class="t" style="left:1109.00px;top:144.45px;font-size:14px;font-weight:700;color:#dadada;letter-spacing:-0.327px;">Current</div>
<div class="t" style="left:1244.30px;top:144.45px;font-size:14px;font-weight:700;color:#dadada;letter-spacing:-0.270px;">Target</div>
<div class="b" style="left:686px;top:170px;width:652px;height:1px;background:#3a3a3a;"></div>
<div class="b" style="left:686px;top:209px;width:652px;height:1px;background:#3a3a3a;"></div>
<div class="b" style="left:686px;top:248px;width:652px;height:1px;background:#3a3a3a;"></div>
<div class="b" style="left:686px;top:287px;width:652px;height:1px;background:#3a3a3a;"></div>
<div class="b" style="left:686px;top:320px;width:652px;height:1px;background:#3a3a3a;"></div>
<div class="t" style="left:741.70px;top:179.45px;font-size:14px;font-weight:700;color:#dadada;letter-spacing:-0.525px;">Extruder</div>
<div class="b" style="left:894.7px;top:186.2px;width:8px;height:8px;border-radius:50%;background:#dc3c32"></div>
<div class="t" style="left:1112.00px;top:179.45px;font-size:14px;color:#cecece;letter-spacing:-0.112px;-webkit-text-stroke:0.4px #cecece;">27.0°C</div>
<div class="t" style="left:993.60px;top:179.60px;font-size:13px;color:#cecece;letter-spacing:0.891px;-webkit-text-stroke:0.4px #cecece;">off</div>
<div class="t" style="left:1211.40px;top:182.96px;font-size:16px;color:#fff;letter-spacing:0.000px;-webkit-text-stroke:0.4px #fff;">0</div>
<div class="b" style="left:1211px;top:205px;width:107px;height:1px;background:#c8c8c8;"></div>
<svg class="i" style="left:1293.6px;top:179px" width="24" height="24" viewBox="0 0 24 24"><path fill="#fff" d="M7,10L12,15L17,10H7Z" /></svg>
<svg class="i" style="left:706px;top:178.1px" width="24" height="24" viewBox="0 0 24 24"><path fill="#6c6c6c" d="M7 2H17V8H19V13H16.5L13 17H11L7.5 13H5V8H7V2M10 22H2V20H10C10.55 20 11 19.55 11 19V18H13V19C13 20.66 11.66 22 10 22M21 13V7H23V13H21M21 17V15H23V17H21Z" /></svg>
<div class="t" style="left:741.70px;top:218.45px;font-size:14px;font-weight:700;color:#dadada;letter-spacing:-0.545px;">Extruder1</div>
<div class="b" style="left:894.7px;top:225.2px;width:8px;height:8px;border-radius:50%;background:#8d33a0"></div>
<div class="t" style="left:1112.00px;top:218.45px;font-size:14px;color:#cecece;letter-spacing:-0.112px;-webkit-text-stroke:0.4px #cecece;">27.2°C</div>
<div class="t" style="left:993.60px;top:218.60px;font-size:13px;color:#cecece;letter-spacing:0.891px;-webkit-text-stroke:0.4px #cecece;">off</div>
<div class="t" style="left:1211.40px;top:221.96px;font-size:16px;color:#fff;letter-spacing:0.000px;-webkit-text-stroke:0.4px #fff;">0</div>
<div class="b" style="left:1211px;top:244px;width:107px;height:1px;background:#c8c8c8;"></div>
<svg class="i" style="left:1293.6px;top:218px" width="24" height="24" viewBox="0 0 24 24"><path fill="#fff" d="M7,10L12,15L17,10H7Z" /></svg>
<svg class="i" style="left:706px;top:217.1px" width="24" height="24" viewBox="0 0 24 24"><path fill="#6c6c6c" d="M7 2H17V8H19V13H16.5L13 17H11L7.5 13H5V8H7V2M10 22H2V20H10C10.55 20 11 19.55 11 19V18H13V19C13 20.66 11.66 22 10 22M21 13V7H23V13H21M21 17V15H23V17H21Z" /></svg>
<div class="t" style="left:741.70px;top:257.45px;font-size:14px;font-weight:700;color:#dadada;letter-spacing:-0.313px;">Heater Bed</div>
<div class="b" style="left:894.7px;top:264.2px;width:8px;height:8px;border-radius:50%;background:#2a80d8"></div>
<div class="t" style="left:1112.00px;top:257.45px;font-size:14px;color:#cecece;letter-spacing:-0.112px;-webkit-text-stroke:0.4px #cecece;">25.5°C</div>
<div class="t" style="left:993.60px;top:257.60px;font-size:13px;color:#cecece;letter-spacing:0.891px;-webkit-text-stroke:0.4px #cecece;">off</div>
<div class="t" style="left:1211.40px;top:260.96px;font-size:16px;color:#fff;letter-spacing:0.000px;-webkit-text-stroke:0.4px #fff;">0</div>
<div class="b" style="left:1211px;top:283px;width:107px;height:1px;background:#c8c8c8;"></div>
<svg class="i" style="left:1293.6px;top:257px" width="24" height="24" viewBox="0 0 24 24"><path fill="#fff" d="M7,10L12,15L17,10H7Z" /></svg>
<svg class="i" style="left:706px;top:255.5px" width="24" height="24" viewBox="0 0 24 24"><path fill="#6c6c6c" d="M2,22V14A2,2 0 0,1 4,12H20A2,2 0 0,1 22,14V22H20V20H4V22H2M5,14A1,1 0 0,0 4,15V17A1,1 0 0,0 5,18A1,1 0 0,0 6,17V15A1,1 0 0,0 5,14M8.5,14A1,1 0 0,0 7.5,15V17A1,1 0 0,0 8.5,18A1,1 0 0,0 9.5,17V15A1,1 0 0,0 8.5,14M12,14A1,1 0 0,0 11,15V17A1,1 0 0,0 12,18A1,1 0 0,0 13,17V15A1,1 0 0,0 12,14M15.5,14A1,1 0 0,0 14.5,15V17A1,1 0 0,0 15.5,18A1,1 0 0,0 16.5,17V15A1,1 0 0,0 15.5,14M19,14A1,1 0 0,0 18,15V17A1,1 0 0,0 19,18A1,1 0 0,0 20,17V15A1,1 0 0,0 19,14Z" /></svg>
<div class="t" style="left:741.70px;top:293.45px;font-size:14px;font-weight:700;color:#dadada;letter-spacing:-0.184px;">Mcu Temp</div>
<div class="b" style="left:894.7px;top:300.2px;width:8px;height:8px;border-radius:50%;background:#10b8a0"></div>
<div class="t" style="left:1112.00px;top:293.45px;font-size:14px;color:#cecece;letter-spacing:-0.112px;-webkit-text-stroke:0.4px #cecece;">32.4°C</div>
<svg class="i" style="left:705.8px;top:292.3px" width="24" height="24" viewBox="0 0 24 24"><path fill="#6c6c6c" d="M15,13V5A3,3 0 0,0 12,2A3,3 0 0,0 9,5V13A5,5 0 0,0 7,17A5,5 0 0,0 12,22A5,5 0 0,0 17,17A5,5 0 0,0 15,13M12,4A1,1 0 0,1 13,5V8H11V5A1,1 0 0,1 12,4Z" /></svg>
<div class="t" style="left:726.00px;top:330.24px;font-size:12px;color:#5e5e5e;letter-spacing:0.504px;-webkit-text-stroke:0.4px #5e5e5e;">Temperature [°C]</div>
<div class="t" style="left:706.80px;top:340.64px;font-size:12px;color:#5e5e5e;letter-spacing:0.652px;-webkit-text-stroke:0.4px #5e5e5e;">40</div>
<div class="t" style="left:706.80px;top:433.74px;font-size:12px;color:#5e5e5e;letter-spacing:0.652px;-webkit-text-stroke:0.4px #5e5e5e;">20</div>
<svg class="i" style="left:700px;top:345px" width="640" height="205" viewBox="700 345 640 205" shape-rendering="auto"><rect x="731.0" y="352" width="1" height="185" fill="#2b2b2b"/><rect x="731.0" y="537" width="1" height="5.5" fill="#484848"/><rect x="791.0" y="352" width="1" height="185" fill="#2b2b2b"/><rect x="791.0" y="537" width="1" height="5.5" fill="#484848"/><rect x="851.0" y="352" width="1" height="185" fill="#2b2b2b"/><rect x="851.0" y="537" width="1" height="5.5" fill="#484848"/><rect x="910.0" y="352" width="1" height="185" fill="#2b2b2b"/><rect x="910.0" y="537" width="1" height="5.5" fill="#484848"/><rect x="970.0" y="352" width="1" height="185" fill="#2b2b2b"/><rect x="970.0" y="537" width="1" height="5.5" fill="#484848"/><rect x="1030.0" y="352" width="1" height="185" fill="#2b2b2b"/><rect x="1030.0" y="537" width="1" height="5.5" fill="#484848"/><rect x="1089.0" y="352" width="1" height="185" fill="#2b2b2b"/><rect x="1089.0" y="537" width="1" height="5.5" fill="#484848"/><rect x="1149.0" y="352" width="1" height="185" fill="#2b2b2b"/><rect x="1149.0" y="537" width="1" height="5.5" fill="#484848"/><rect x="1209.0" y="352" width="1" height="185" fill="#2b2b2b"/><rect x="1209.0" y="537" width="1" height="5.5" fill="#484848"/><rect x="1269.5" y="352" width="1" height="185" fill="#2b2b2b"/><rect x="1269.5" y="537" width="1" height="5.5" fill="#484848"/><rect x="1323" y="352" width="1" height="185" fill="#2b2b2b"/><rect x="727" y="352" width="597" height="1" fill="#383838"/><rect x="727" y="444" width="597" height="1" fill="#383838"/><rect x="726" y="352" width="1" height="186" fill="#484848"/><rect x="726" y="537" width="598" height="1" fill="#888"/><polyline fill="none" stroke="#e0384a" stroke-width="1.6" stroke-linejoin="round" points="727.0,537.0 1280.5,537.0 1282.3,412.5 1294.0,412.5 1296.0,537.0 1298.5,537.0 1300.3,412.5 1323.0,412.5"/><polyline fill="none" stroke="#a03cb0" stroke-width="1.6" stroke-linejoin="round" points="727.0,537.0 1280.5,537.0 1282.3,411.4 1294.0,411.4 1296.0,537.0 1298.5,537.0 1300.3,411.4 1323.0,411.4"/><polyline fill="none" stroke="#2a8ee6" stroke-width="2" stroke-linejoin="round" points="727.0,537.0 1280.8,537.0 1282.6,419.3 1293.8,419.3 1296.0,537.0 1298.5,537.0 1300.5,419.3 1323.0,419.3"/><polyline fill="none" stroke="#12d4c4" stroke-width="2" stroke-linejoin="round" points="727.0,537.0 1278.0,537.0 1281.2,385.8 1295.8,386.0 1296.8,537.0 1297.5,386.0 1298.2,537.0 1299.0,386.0 1299.4,537.0 1300.3,385.6 1303.0,386.4 1309.0,386.0 1314.0,387.0 1319.0,387.6 1323.0,387.2"/></svg>
<div class="t" style="left:716.20px;top:542.04px;font-size:12px;color:#5e5e5e;letter-spacing:0.143px;-webkit-text-stroke:0.4px #5e5e5e;">14:36</div>
<div class="t" style="left:776.20px;top:542.04px;font-size:12px;color:#5e5e5e;letter-spacing:0.143px;-webkit-text-stroke:0.4px #5e5e5e;">14:38</div>
<div class="t" style="left:836.20px;top:542.04px;font-size:12px;color:#5e5e5e;letter-spacing:0.143px;-webkit-text-stroke:0.4px #5e5e5e;">14:40</div>
<div class="t" style="left:895.20px;top:542.04px;font-size:12px;color:#5e5e5e;letter-spacing:0.143px;-webkit-text-stroke:0.4px #5e5e5e;">14:42</div>
<div class="t" style="left:955.20px;top:542.04px;font-size:12px;color:#5e5e5e;letter-spacing:0.143px;-webkit-text-stroke:0.4px #5e5e5e;">14:44</div>
<div class="t" style="left:1015.20px;top:542.04px;font-size:12px;color:#5e5e5e;letter-spacing:0.143px;-webkit-text-stroke:0.4px #5e5e5e;">14:46</div>
<div class="t" style="left:1074.20px;top:542.04px;font-size:12px;color:#5e5e5e;letter-spacing:0.143px;-webkit-text-stroke:0.4px #5e5e5e;">14:48</div>
<div class="t" style="left:1134.20px;top:542.04px;font-size:12px;color:#5e5e5e;letter-spacing:0.143px;-webkit-text-stroke:0.4px #5e5e5e;">14:50</div>
<div class="t" style="left:1194.20px;top:542.04px;font-size:12px;color:#5e5e5e;letter-spacing:0.143px;-webkit-text-stroke:0.4px #5e5e5e;">14:52</div>
<div class="t" style="left:1254.00px;top:542.04px;font-size:12px;color:#5e5e5e;letter-spacing:0.143px;-webkit-text-stroke:0.4px #5e5e5e;">14:54</div>
<div class="b sh" style="left:1362px;top:88px;width:517px;height:400px;background:#1e1e1e;border-radius:4px;"></div>
<div class="b" style="left:1362px;top:88px;width:517px;height:48px;background:#282828;border-radius:4px 4px 0 0;"></div>
<svg class="i" style="left:1378px;top:102px" width="24" height="24" viewBox="0 0 24 24"><path fill="#fff" d="M12,2A7,7 0 0,1 19,9A7,7 0 0,1 12,16A7,7 0 0,1 5,9A7,7 0 0,1 12,2M12,4A5,5 0 0,0 7,9A5,5 0 0,0 12,14A5,5 0 0,0 17,9A5,5 0 0,0 12,4M12,6A3,3 0 0,1 15,9A3,3 0 0,1 12,12A3,3 0 0,1 9,9A3,3 0 0,1 12,6M6,22A2,2 0 0,1 4,20C4,19.62 4.1,19.27 4.29,18.97L6.11,15.81C7.69,17.17 9.75,18 12,18C14.25,18 16.31,17.17 17.89,15.81L19.71,18.97C19.9,19.27 20,19.62 20,20A2,2 0 0,1 18,22H6Z" /></svg>
<div class="t" style="left:1415.30px;top:102.27px;font-size:20px;color:#fff;letter-spacing:-0.329px;-webkit-text-stroke:0.4px #fff;">Webcam</div>
<div class="b" style="left:1811px;top:454px;width:68px;height:28px;background:#080808;border-radius:4px 0 0 4px;"></div>
<div class="t" style="left:1820.70px;top:457.35px;font-size:14px;color:#d8d8d8;letter-spacing:-0.447px;-webkit-text-stroke:0.4px #d8d8d8;">FPS: 00</div>
<div class="b sh" style="left:1362px;top:512px;width:517px;height:420px;background:#1e1e1e;border-radius:4px;"></div>
<div class="b" style="left:1362px;top:512px;width:517px;height:48px;background:#282828;border-radius:4px 4px 0 0;"></div>
<svg class="i" style="left:1378px;top:524.5px" width="24" height="24" viewBox="0 0 24 24"><path fill="#fff" d="M13,19V16H21V19H13M8.5,13L2.47,7H6.71L11.67,11.95C12.25,12.54 12.25,13.5 11.67,14.07L6.74,19H2.5L8.5,13Z" /></svg>
<div class="t" style="left:1410.00px;top:526.27px;font-size:20px;color:#fff;letter-spacing:-0.147px;-webkit-text-stroke:0.4px #fff;">Console</div>
<div class="b" style="left:1378px;top:576px;width:369px;height:40px;background:transparent;border-radius:4px;border:1px solid #666666;"></div>
<div class="t" style="left:1389.80px;top:587.46px;font-size:16px;color:#b4b4b4;letter-spacing:-0.231px;-webkit-text-stroke:0.4px #b4b4b4;">Send code...</div>
<svg class="i" style="left:1711px;top:584.3px" width="24" height="24" viewBox="0 0 24 24"><path fill="#fff" d="M2,21L23,12L2,3V10L17,12L2,14V21Z" /></svg>
<div class="b sh" style="left:1771px;top:576px;width:40px;height:36px;background:#424242;border-radius:4px;"></div>
<svg class="i" style="left:1779px;top:582px" width="24" height="24" viewBox="0 0 24 24"><path fill="#fff" d="M10,19H13V22H10V19M12,2C17.35,2.22 19.68,7.62 16.5,11.67C15.67,12.67 14.33,13.33 13.67,14.17C13,15 13,16 13,17H10C10,15.33 10,13.92 10.67,12.92C11.33,11.92 12.67,11.33 13.5,10.67C15.92,8.43 15.32,5.26 12,5A3,3 0 0,0 9,8H6A6,6 0 0,1 12,2Z" /></svg>
<div class="b sh" style="left:1823px;top:576px;width:40px;height:36px;background:#424242;border-radius:4px;"></div>
<svg class="i" style="left:1831px;top:582px" width="24" height="24" viewBox="0 0 24 24"><path fill="#fff" d="M14,12V19.88C14.04,20.18 13.94,20.5 13.71,20.71C13.32,21.1 12.69,21.1 12.3,20.71L10.29,18.7C10.06,18.47 9.96,18.16 10,17.87V12H9.97L4.21,4.62C3.87,4.19 3.95,3.56 4.38,3.22C4.57,3.08 4.78,3 5,3V3H19V3C19.22,3 19.43,3.08 19.62,3.22C20.05,3.56 20.13,4.19 19.79,4.62L14.03,12H14Z" /></svg>
<div class="b" style="left:1362px;top:632px;width:517px;height:1px;background:#363636;"></div>
<div class="t" style="left:1374.20px;top:641.15px;font-size:14px;color:#cecece;letter-spacing:-0.028px;-webkit-text-stroke:0.4px #cecece;">14:55:01</div>
<div class="t" style="left:1440.80px;top:641.15px;font-size:14px;color:#cecece;letter-spacing:-0.035px;-webkit-text-stroke:0.4px #cecece;">Klipper state: Ready</div>
<div class="b" style="left:1362px;top:671px;width:517px;height:1px;background:#363636;"></div>
<div class="t" style="left:1374.20px;top:680.15px;font-size:14px;color:#cecece;letter-spacing:-0.028px;-webkit-text-stroke:0.4px #cecece;">14:54:58</div>
<div class="t" style="left:1441.00px;top:680.36px;font-size:13.4px;color:#2c92e6;letter-spacing:-0.341px;-webkit-text-stroke:0.4px #2c92e6;">FIRMWARE_RESTART</div>
<div class="b" style="left:1362px;top:710px;width:517px;height:1px;background:#363636;"></div>
<div class="t" style="left:1374.20px;top:719.15px;font-size:14px;color:#cecece;letter-spacing:-0.028px;-webkit-text-stroke:0.4px #cecece;">14:54:56</div>
<div class="t" style="left:1440.80px;top:719.15px;font-size:14px;color:#cecece;letter-spacing:-0.035px;-webkit-text-stroke:0.4px #cecece;">Klipper state: Ready</div>
<div class="b" style="left:1362px;top:749px;width:517px;height:1px;background:#363636;"></div>
<div class="t" style="left:1374.20px;top:758.15px;font-size:14px;color:#cecece;letter-spacing:-0.028px;-webkit-text-stroke:0.4px #cecece;">14:54:55</div>
<div class="t" style="left:1441.00px;top:758.36px;font-size:13.4px;color:#2c92e6;letter-spacing:-0.341px;-webkit-text-stroke:0.4px #2c92e6;">FIRMWARE_RESTART</div>
<div class="b" style="left:1362px;top:788px;width:517px;height:1px;background:#363636;"></div>
<div class="t" style="left:1374.20px;top:797.15px;font-size:14px;color:#cecece;letter-spacing:-0.028px;-webkit-text-stroke:0.4px #cecece;">14:54:55</div>
<div class="t" style="left:1441.00px;top:797.36px;font-size:13.4px;color:#2c92e6;letter-spacing:-0.341px;-webkit-text-stroke:0.4px #2c92e6;">FIRMWARE_RESTART</div>
<div class="b" style="left:1362px;top:827px;width:517px;height:1px;background:#363636;"></div>
<div class="t" style="left:1374.20px;top:836.15px;font-size:14px;color:#cecece;letter-spacing:-0.028px;-webkit-text-stroke:0.4px #cecece;">14:54:55</div>
<div class="t" style="left:1441.00px;top:836.36px;font-size:13.4px;color:#2c92e6;letter-spacing:-0.341px;-webkit-text-stroke:0.4px #2c92e6;">FIRMWARE_RESTART</div>
<div class="b" style="left:1362px;top:866px;width:517px;height:1px;background:#363636;"></div>
<div class="t" style="left:1374.20px;top:875.15px;font-size:14px;color:#cecece;letter-spacing:-0.028px;-webkit-text-stroke:0.4px #cecece;">14:54:54</div>
<div class="t" style="left:1441.00px;top:875.36px;font-size:13.4px;color:#2c92e6;letter-spacing:-0.341px;-webkit-text-stroke:0.4px #2c92e6;">FIRMWARE_RESTART</div>
<div class="b" style="left:1362px;top:905px;width:517px;height:1px;background:#363636;"></div>
<div class="t" style="left:1374.20px;top:914.15px;font-size:14px;color:#cecece;letter-spacing:-0.028px;-webkit-text-stroke:0.4px #cecece;">14:54:54</div>
<div class="t" style="left:1441.00px;top:914.36px;font-size:13.4px;color:#2c92e6;letter-spacing:-0.341px;-webkit-text-stroke:0.4px #2c92e6;">FIRMWARE_RESTART</div>
<div class="b" style="left:1871.5px;top:633px;width:5.5px;height:116px;background:#6a6a6a;border-radius:3px;"></div>
<div class="b" style="left:1356px;top:932px;width:534px;height:5px;background:#121212;"></div>
</body></html>
